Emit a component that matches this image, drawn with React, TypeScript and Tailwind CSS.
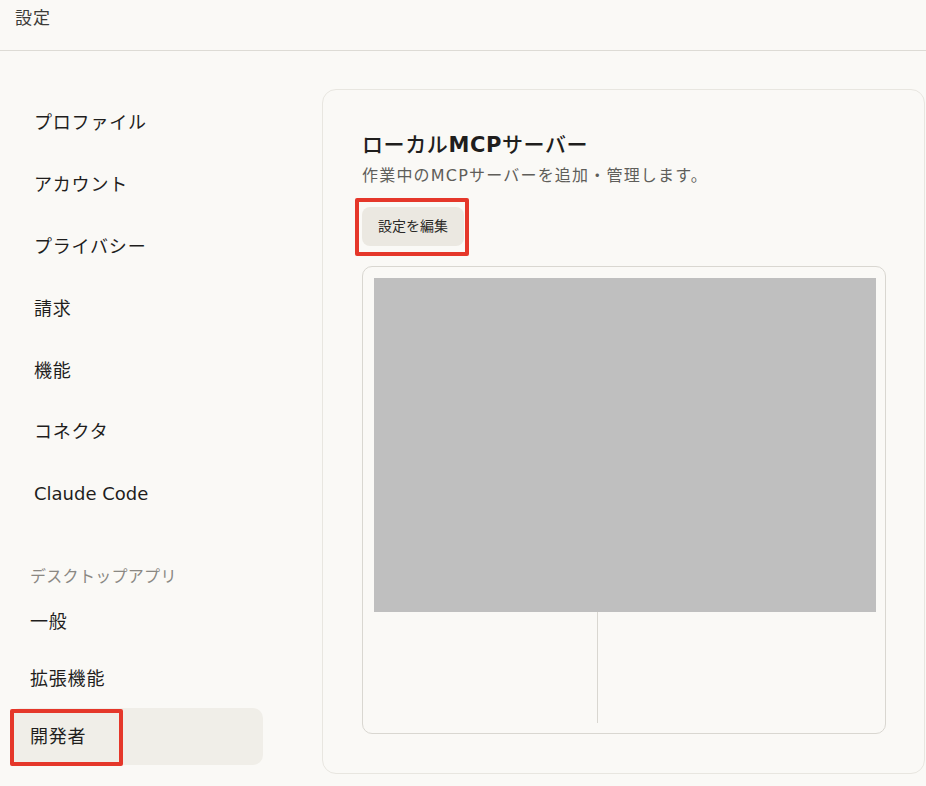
const font = { fontFamily: '"DejaVu Sans", "Noto Sans CJK JP", sans-serif' };

const topItems = ['プロファイル', 'アカウント', 'プライバシー', '請求', '機能', 'コネクタ'];
const appItems = ['一般', '拡張機能'];

export default function App() {
  return (
    <div className="w-[926px] h-[786px] overflow-hidden bg-[#faf9f6] text-[#1f1e1d]" style={font}>
      <header className="h-[51px] border-b border-[#dddbd5] px-[15px] pt-[6px] text-[17px] leading-[24px] tracking-[1px] text-[#3d3c39]">
        設定
      </header>

      <div className="flex">
        {/* sidebar */}
        <nav className="w-[322px] shrink-0 pl-[10px] pt-[41px]">
          {topItems.map((label) => (
            <div key={label} className="flex h-[61.8px] w-[253px] items-center pl-[24px] text-[18px] tracking-[0.8px]">
              {label}
            </div>
          ))}
          <div className="flex h-[61.8px] w-[253px] items-center pl-[24px] text-[18px]">Claude Code</div>
          <div className="mt-[40px] pl-[20px] text-[16px] leading-[24px] tracking-[0.3px] text-[#8a8883]">デスクトップアプリ</div>
          <div className="mt-[4px]">
            {appItems.map((label) => (
              <div key={label} className="flex h-[57.5px] w-[253px] items-center pl-[20px] text-[18px] tracking-[0.8px]">
                {label}
              </div>
            ))}
            <div className="relative flex h-[57px] w-[253px] items-center rounded-[10px] bg-[#f0eee8] pl-[20px] text-[18px] tracking-[0.8px]">
              開発者
              <div className="absolute left-0 top-[1px] h-[57px] w-[113px] rounded-[2px] border-[4px] border-[#e5372a]" />
            </div>
          </div>
        </nav>

        {/* main */}
        <main className="mt-[38px] h-[685px] w-[603px] rounded-[14px] border border-[#e8e6e0] px-[39px] pt-[41px]">
          <h2 className="text-[21px] font-medium leading-[28px] tracking-[0.6px]">
            ローカル<span className="font-bold">MCP</span>サーバー
          </h2>
          <p className="mt-[6px] text-[16px] leading-[22px] tracking-[1.2px] text-[#5f5e5a]">作業中のMCPサーバーを追加・管理します。</p>

          <div className="relative mt-[20px] w-fit">
            <button className="h-[39px] w-[102px] rounded-[8px] bg-[#ebe8e1] text-[14px] text-[#2a2927]">設定を編集</button>
            <div className="absolute -left-[7px] -top-[9px] h-[58px] w-[114px] rounded-[2px] border-[4px] border-[#e5372a]" />
          </div>

          <div className="relative mt-[20px] h-[468px] w-[524px] rounded-[10px] border border-[#d9d7d1] px-[11px] pt-[11px] pb-[10px]">
            <div className="flex h-full">
              <div className="w-[224px] border-r border-[#d9d7d1]" />
              <div className="flex-1" />
            </div>
            <div className="absolute left-[11px] top-[11px] h-[334px] w-[502px] bg-[#bfbfbf]" />
          </div>
        </main>
      </div>
    </div>
  );
}
